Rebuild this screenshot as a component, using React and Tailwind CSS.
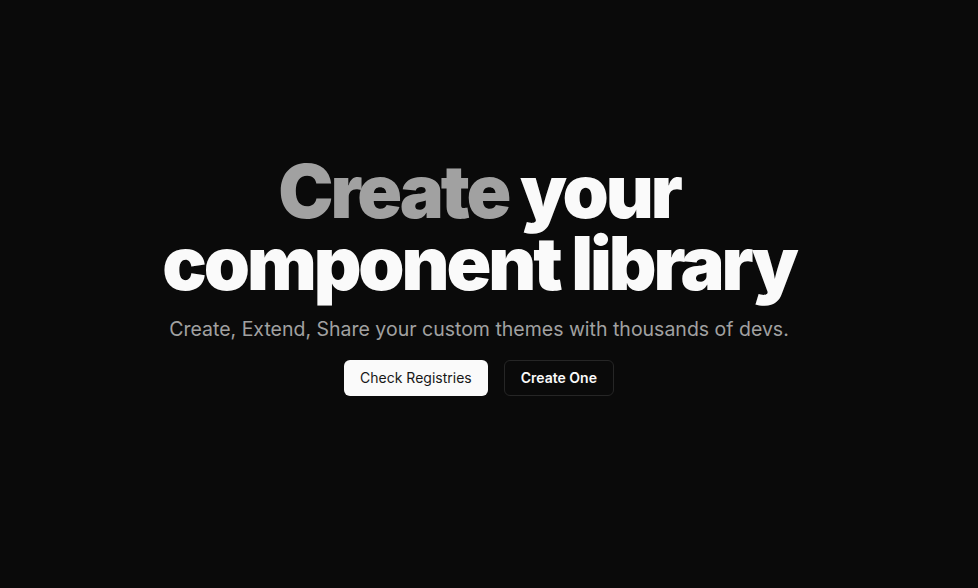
export default function App() {
  return (
    <div className="min-h-screen w-full bg-[#0a0a0a] flex flex-col items-center pt-[155px] pr-[20px]" style={{ fontFamily: "Inter, 'Liberation Sans', sans-serif" }}>
      <h1 className="text-center font-black text-[74px] leading-[72px] tracking-[-0.042em] text-[#fafafa]">
        <span className="text-[#a1a1a1]">Create</span> your
        <br />
        component library
      </h1>
      <p className="mt-[16px] text-[19.5px] leading-[28px] text-[#a1a1a1]">
        Create, Extend, Share your custom themes with thousands of devs.
      </p>
      <div className="mt-[17px] flex gap-4">
        <button className="h-9 px-4 rounded-md bg-[#fafafa] text-[#171717] text-sm">Check Registries</button>
        <button className="h-9 px-4 rounded-md border border-[#262626] bg-[#0a0a0a] text-[#fafafa] text-sm font-semibold">Create One</button>
      </div>
    </div>
  );
}
